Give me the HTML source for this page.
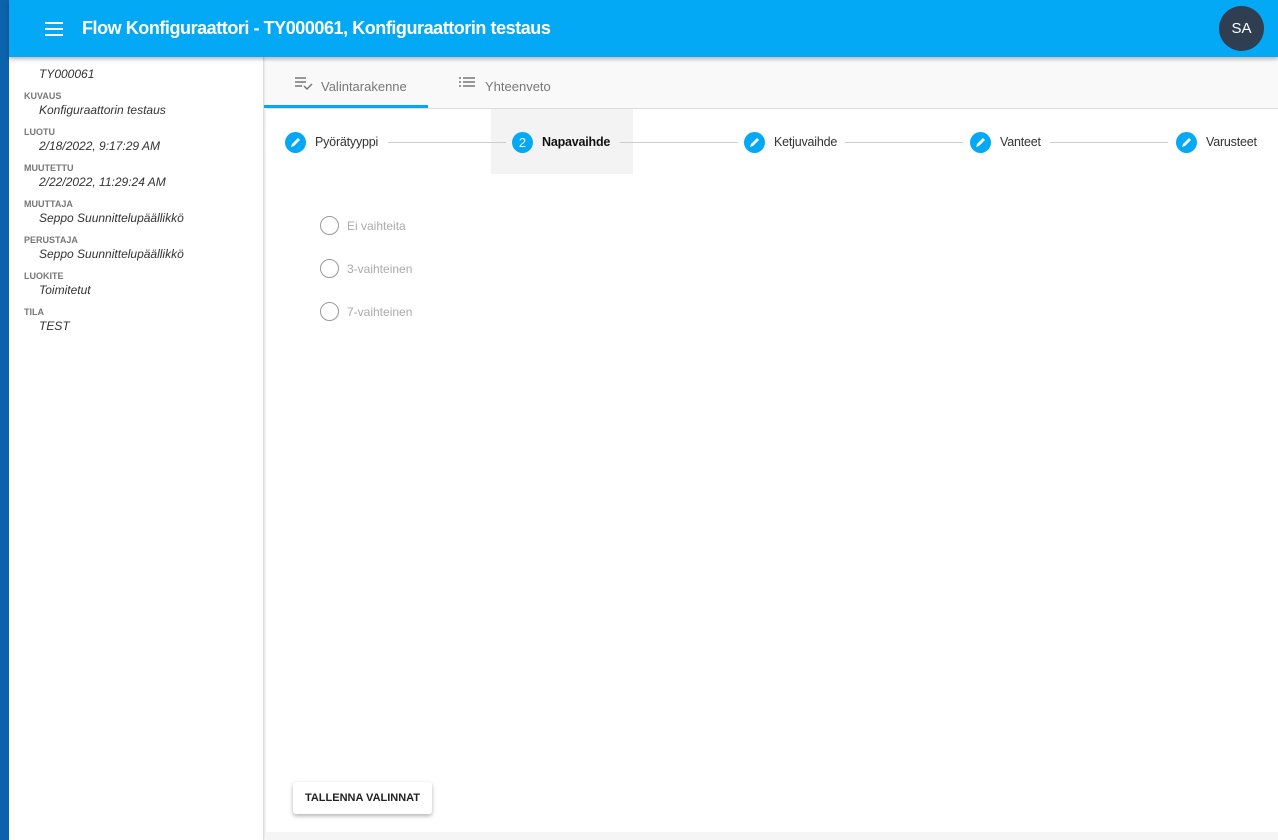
<!DOCTYPE html>
<html><head><meta charset="utf-8"><style>
*{margin:0;padding:0;box-sizing:border-box}
body{width:1278px;height:840px;overflow:hidden;font-family:"Liberation Sans",sans-serif;background:#fff;position:relative}
.strip{position:absolute;left:0;top:0;width:9px;height:840px;background:#0b63ad}
.hdr{position:absolute;left:9px;top:0;width:1269px;height:57px;background:#03a9f4;box-shadow:0 2px 4px rgba(0,0,0,.3);z-index:2}
.hdr .t{position:absolute;left:73px;top:18px;color:#fff;font-size:18px;font-weight:bold;letter-spacing:-0.45px}
.ham{position:absolute;left:36px;top:22px;width:18px}
.ham i{display:block;height:2px;background:#fff;margin-bottom:4px}
.av{position:absolute;left:1210px;top:6px;width:45px;height:45px;border-radius:50%;background:#2f3e51;color:#fff;font-size:15px;text-align:center;line-height:45px}
.side{position:absolute;left:9px;top:57px;width:255px;height:783px;background:#fff;border-right:1px solid #ddd;box-shadow:1px 0 2px rgba(0,0,0,.12)}
.lab{position:absolute;left:15px;font-size:9px;font-weight:bold;color:#777}
.val{position:absolute;left:30px;font-size:12px;font-style:italic;color:#333}
.tabs{position:absolute;left:266px;top:58px;width:1012px;height:51px;background:#f9f9f9;border-bottom:1px solid #ddd}
.tab{position:absolute;top:21px;font-size:13px;color:#777}
.ul{position:absolute;left:264px;top:105px;width:164px;height:3px;background:#03a9f4}
.sel{position:absolute;left:491px;top:109px;width:142px;height:65px;background:#f3f3f3}
.step{position:absolute;top:131px;height:22px;display:flex;align-items:center;font-size:12.5px;color:#333;letter-spacing:-0.2px}
.c{width:21px;height:21px;border-radius:50%;background:#03a9f4;color:#fff;font-size:13px;display:flex;align-items:center;justify-content:center;margin-right:9px;letter-spacing:0}
.line{position:absolute;top:142px;height:1px;background:#ccc}
.r{position:absolute;left:320px;display:flex;align-items:center;font-size:12px;color:#aaa}
.r i{width:19px;height:19px;border:1.5px solid #999;border-radius:50%;margin-right:8px}
.btn{position:absolute;left:293px;top:782px;width:139px;height:32px;background:#fff;border-radius:3px;box-shadow:0 2px 4px rgba(0,0,0,.3);font-size:11px;font-weight:bold;color:#222;text-align:center;line-height:32px}
.bot{position:absolute;left:266px;top:832px;width:1012px;height:8px;background:#f5f5f5}
</style></head><body>
<div class="strip"></div>
<div class="hdr"><div class="ham"><i></i><i></i><i></i></div><div class="t">Flow Konfiguraattori - TY000061, Konfiguraattorin testaus</div><div class="av">SA</div></div>
<div class="side">
<div class="val" style="top:10px">TY000061</div>
<div class="lab" style="top:34px">KUVAUS</div><div class="val" style="top:46px">Konfiguraattorin testaus</div>
<div class="lab" style="top:70px">LUOTU</div><div class="val" style="top:82px">2/18/2022, 9:17:29 AM</div>
<div class="lab" style="top:106px">MUUTETTU</div><div class="val" style="top:118px">2/22/2022, 11:29:24 AM</div>
<div class="lab" style="top:142px">MUUTTAJA</div><div class="val" style="top:154px">Seppo Suunnittelupäällikkö</div>
<div class="lab" style="top:178px">PERUSTAJA</div><div class="val" style="top:190px">Seppo Suunnittelupäällikkö</div>
<div class="lab" style="top:214px">LUOKITE</div><div class="val" style="top:226px">Toimitetut</div>
<div class="lab" style="top:250px">TILA</div><div class="val" style="top:262px">TEST</div>
</div>
<div class="tabs">
<div class="tab" style="left:28px;top:17px"><svg width="20" height="16" viewBox="0 0 20 16"><path d="M1 3h11M1 7h11M1 11h7M10 11l3 3 5-5" stroke="#777" stroke-width="1.5" fill="none"/></svg></div>
<div class="tab" style="left:55px">Valintarakenne</div>
<div class="tab" style="left:192px;top:17px"><svg width="18" height="14" viewBox="0 0 18 14"><path d="M1 3h2M1 7h2M1 11h2M5 3h12M5 7h12M5 11h12" stroke="#777" stroke-width="1.5"/></svg></div>
<div class="tab" style="left:219px">Yhteenveto</div>
</div>
<div class="ul"></div>
<div class="sel"></div>
<div class="line" style="left:388px;width:118px"></div>
<div class="line" style="left:620px;width:118px"></div>
<div class="line" style="left:845px;width:118px"></div>
<div class="line" style="left:1050px;width:118px"></div>
<div class="step" style="left:285px"><div class="c"><svg width="11" height="11" viewBox="0 0 11 11"><path d="M1 10l1-3 6-6 2 2-6 6z" fill="#fff"/></svg></div>Pyörätyyppi</div>
<div class="step" style="left:512px;font-weight:bold;color:#111"><div class="c" style="font-weight:normal">2</div>Napavaihde</div>
<div class="step" style="left:744px"><div class="c"><svg width="11" height="11" viewBox="0 0 11 11"><path d="M1 10l1-3 6-6 2 2-6 6z" fill="#fff"/></svg></div>Ketjuvaihde</div>
<div class="step" style="left:970px"><div class="c"><svg width="11" height="11" viewBox="0 0 11 11"><path d="M1 10l1-3 6-6 2 2-6 6z" fill="#fff"/></svg></div>Vanteet</div>
<div class="step" style="left:1176px"><div class="c"><svg width="11" height="11" viewBox="0 0 11 11"><path d="M1 10l1-3 6-6 2 2-6 6z" fill="#fff"/></svg></div>Varusteet</div>
<div class="r" style="top:216px"><i></i>Ei vaihteita</div>
<div class="r" style="top:259px"><i></i>3-vaihteinen</div>
<div class="r" style="top:302px"><i></i>7-vaihteinen</div>
<div class="btn">TALLENNA VALINNAT</div>
<div class="bot"></div>
</body></html>
